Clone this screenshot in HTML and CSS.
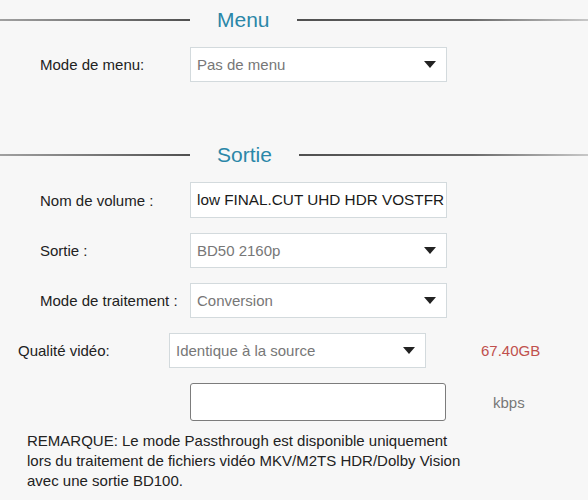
FILE: index.html
```html
<!DOCTYPE html>
<html lang="fr">
<head>
    <meta charset="UTF-8">
    <meta name="viewport" content="width=device-width, initial-scale=1.0">
    <title>Menu / Sortie</title>
    <link rel="stylesheet" href="styles.css">
</head>
<body>

<div class="settings">
    <div class="section-title">
        <span class="line line-left"></span>
        <h2>Menu</h2>
        <span class="line line-right"></span>
    </div>
    <div class="form-row first">
        <label>Mode de menu:</label>
        <div class="select">
            <span>Pas de menu</span>
            <svg class="arrow" width="12" height="7" viewBox="0 0 12 7"><path d="M0 0H12L6 7Z" fill="#222"/></svg>
        </div>
    </div>

    <div class="section-title second">
        <span class="line line-left"></span>
        <h2>Sortie</h2>
        <span class="line line-right"></span>
    </div>
    <div class="form-row first">
        <label>Nom de volume :</label>
        <input type="text" class="text-input" value="low FINAL.CUT UHD HDR VOSTFR">
    </div>
    <div class="form-row">
        <label>Sortie :</label>
        <div class="select">
            <span>BD50 2160p</span>
            <svg class="arrow" width="12" height="7" viewBox="0 0 12 7"><path d="M0 0H12L6 7Z" fill="#222"/></svg>
        </div>
    </div>
    <div class="form-row">
        <label>Mode de traitement :</label>
        <div class="select">
            <span>Conversion</span>
            <svg class="arrow" width="12" height="7" viewBox="0 0 12 7"><path d="M0 0H12L6 7Z" fill="#222"/></svg>
        </div>
    </div>
    <div class="form-row quality">
        <label>Qualité vidéo:</label>
        <div class="select">
            <span>Identique à la source</span>
            <svg class="arrow" width="12" height="7" viewBox="0 0 12 7"><path d="M0 0H12L6 7Z" fill="#222"/></svg>
        </div>
        <span class="size">67.40GB</span>
    </div>
    <div class="form-row bitrate">
        <input type="text" class="kbps-input" value="">
        <span class="unit">kbps</span>
    </div>

    <p class="note">REMARQUE: Le mode Passthrough est disponible uniquement lors du traitement de fichiers vidéo MKV/M2TS HDR/Dolby Vision avec une sortie BD100.</p>
</div>

</body>
</html>
```

FILE: styles.css
```css
body {
    font-family: "Liberation Sans", Arial, sans-serif;
    background-color: #f7f7f7;
    margin: 0;
    color: #222;
}
.settings {
    width: 588px;
}
.section-title {
    display: flex;
    align-items: center;
    height: 40px;
}
.section-title.second {
    margin-top: 53px;
}
.section-title h2 {
    margin: 0 27px;
    font-size: 21px;
    font-weight: normal;
    color: #2b87a8;
}
.line {
    height: 2px;
}
.line-left {
    width: 190px;
    background: linear-gradient(to right, #a0a0a0, #505050);
}
.line-right {
    flex: 1;
    background: linear-gradient(to right, #505050, #6a6a6a 60%, #c8c8c8);
}
.form-row {
    display: flex;
    align-items: center;
    padding-left: 40px;
    margin-top: 15px;
}
.form-row.first {
    margin-top: 7px;
}
.form-row label {
    width: 150px;
    font-size: 15px;
}
.select {
    box-sizing: border-box;
    width: 257px;
    height: 35px;
    display: flex;
    align-items: center;
    justify-content: space-between;
    padding: 0 10px 0 6px;
    background: white;
    border: 1px solid #d3dadd;
    font-size: 15px;
    color: #777;
}
.text-input {
    box-sizing: border-box;
    width: 257px;
    height: 36px;
    margin: 0;
    padding: 0 0 0 6px;
    background: white;
    border: 1px solid #d3dadd;
    font-family: inherit;
    font-size: 15.3px;
    color: #1a1a1a;
    outline: none;
}
.quality {
    padding-left: 18px;
}
.quality label {
    width: 151px;
}
.size {
    margin-left: 55px;
    font-size: 15px;
    color: #c0504d;
}
.bitrate {
    padding-left: 190px;
}
.kbps-input {
    box-sizing: border-box;
    width: 256px;
    height: 38px;
    margin: 0;
    background: white;
    border: 1px solid #7c7c7c;
    border-radius: 3px;
    outline: none;
}
.unit {
    margin-left: 47px;
    font-size: 15px;
    color: #777;
}
.note {
    margin: 10px 0 0 27px;
    width: 440px;
    font-size: 15px;
    line-height: 20px;
    color: #222;
}
```
